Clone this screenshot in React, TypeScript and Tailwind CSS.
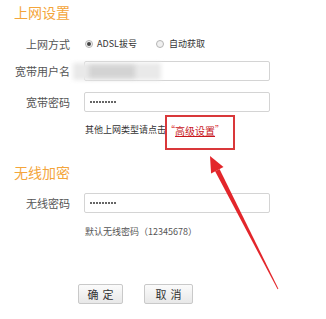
import React from 'react';

/* small helpers */
function Label({ children }: { children: React.ReactNode }) {
  return (
    <span className="w-[56px] shrink-0 text-right text-[11px] text-[#555] whitespace-nowrap">
      {children}
    </span>
  );
}

function Radio({ checked }: { checked?: boolean }) {
  return (
    <span className="w-[8px] h-[8px] rounded-full border border-[#b5b5b5] bg-[#f0f0f0] flex items-center justify-center">
      {checked && <span className="w-[4px] h-[4px] rounded-full bg-[#444]" />}
    </span>
  );
}

function PwdInput() {
  return (
    <div className="w-[186px] h-[20px] border border-[#d4d4d4] rounded-[2px] bg-white flex items-center pl-[5px] gap-[1px]">
      {Array.from({ length: 9 }).map((_, i) => (
        <span key={i} className="w-[2px] h-[2px] rounded-full bg-[#333]" />
      ))}
    </div>
  );
}

function Btn({ children, w }: { children: React.ReactNode; w: string }) {
  return (
    <button
      className={`${w} h-[20px] border border-[#c9c9c9] rounded-[2px] bg-gradient-to-b from-[#fbfbfb] to-[#e8e8e8] text-[11px] text-[#333] tracking-[4px] pl-[4px] leading-none`}
    >
      {children}
    </button>
  );
}

export default function App() {
  return (
    <div
      className="relative w-[326px] h-[319px] bg-white overflow-hidden"
      style={{ fontFamily: '"Noto Sans CJK SC", "Noto Sans", sans-serif' }}
    >
      <div className="pt-[3px] pl-[14px] flex flex-col">
        {/* 上网设置 */}
        <div className="h-[18px] leading-[18px] text-[14px] text-[#f4a53b]">上网设置</div>

        <div className="mt-[13px] h-[20px] flex items-center gap-[14px]">
          <Label>上网方式</Label>
          <div className="flex items-center text-[9px] text-[#333]">
            <span className="ml-[1px]"><Radio checked /></span>
            <span className="ml-[4px]">ADSL拔号</span>
            <span className="ml-[19px]"><Radio /></span>
            <span className="ml-[5px]">自动获取</span>
          </div>
        </div>

        <div className="mt-[7px] h-[20px] flex items-center gap-[14px]">
          <Label>宽带用户名</Label>
          <div className="relative w-[186px] h-[20px] border border-[#d4d4d4] rounded-[2px] bg-white">
            {/* blurred user name */}
            <div className="absolute left-[-12px] top-[1px] w-[88px] h-[17px] bg-[#e9e9e9] blur-[2px]" />
            <div className="absolute left-[4px] top-[3px] w-[46px] h-[13px] bg-[#d3d3d3] blur-[2px]" />
          </div>
        </div>

        <div className="mt-[11px] h-[20px] flex items-center gap-[14px]">
          <Label>宽带密码</Label>
          <PwdInput />
        </div>

        <div className="mt-[10px] h-[16px] flex items-center pl-[71px] text-[9px] text-[#333] whitespace-nowrap">
          其他上网类型请点击
          <span className="text-[#d33]">“</span>
          <span className="text-[10px] text-[#c8161d] underline">高级设置</span>
          <span className="text-[#d33]">”</span>
        </div>

        {/* 无线加密 */}
        <div className="mt-[25px] h-[18px] leading-[18px] text-[14px] text-[#f4a53b]">无线加密</div>

        <div className="mt-[12px] h-[20px] flex items-center gap-[14px]">
          <Label>无线密码</Label>
          <PwdInput />
        </div>

        <div className="mt-[11px] h-[16px] flex items-center pl-[71px] text-[9px] text-[#555] whitespace-nowrap">
          默认无线密码（12345678）
        </div>

        <div className="mt-[44px] flex gap-[21px] pl-[64px]">
          <Btn w="w-[45px]">确定</Btn>
          <Btn w="w-[49px]">取消</Btn>
        </div>
      </div>

      {/* annotation: red box + arrow */}
      <div className="absolute left-[165px] top-[115px] w-[70px] h-[35px] border-2 border-[#d9383a]" />
      <svg className="absolute inset-0 pointer-events-none" width="326" height="319" viewBox="0 0 326 319">
        <polygon points="210,156 223.5,167 211.1,173.4" fill="#e3262b" />
        <polygon points="219.5,169.1 278.4,288.8 277.6,289.2 215.1,171.3" fill="#e3262b" />
      </svg>
    </div>
  );
}
